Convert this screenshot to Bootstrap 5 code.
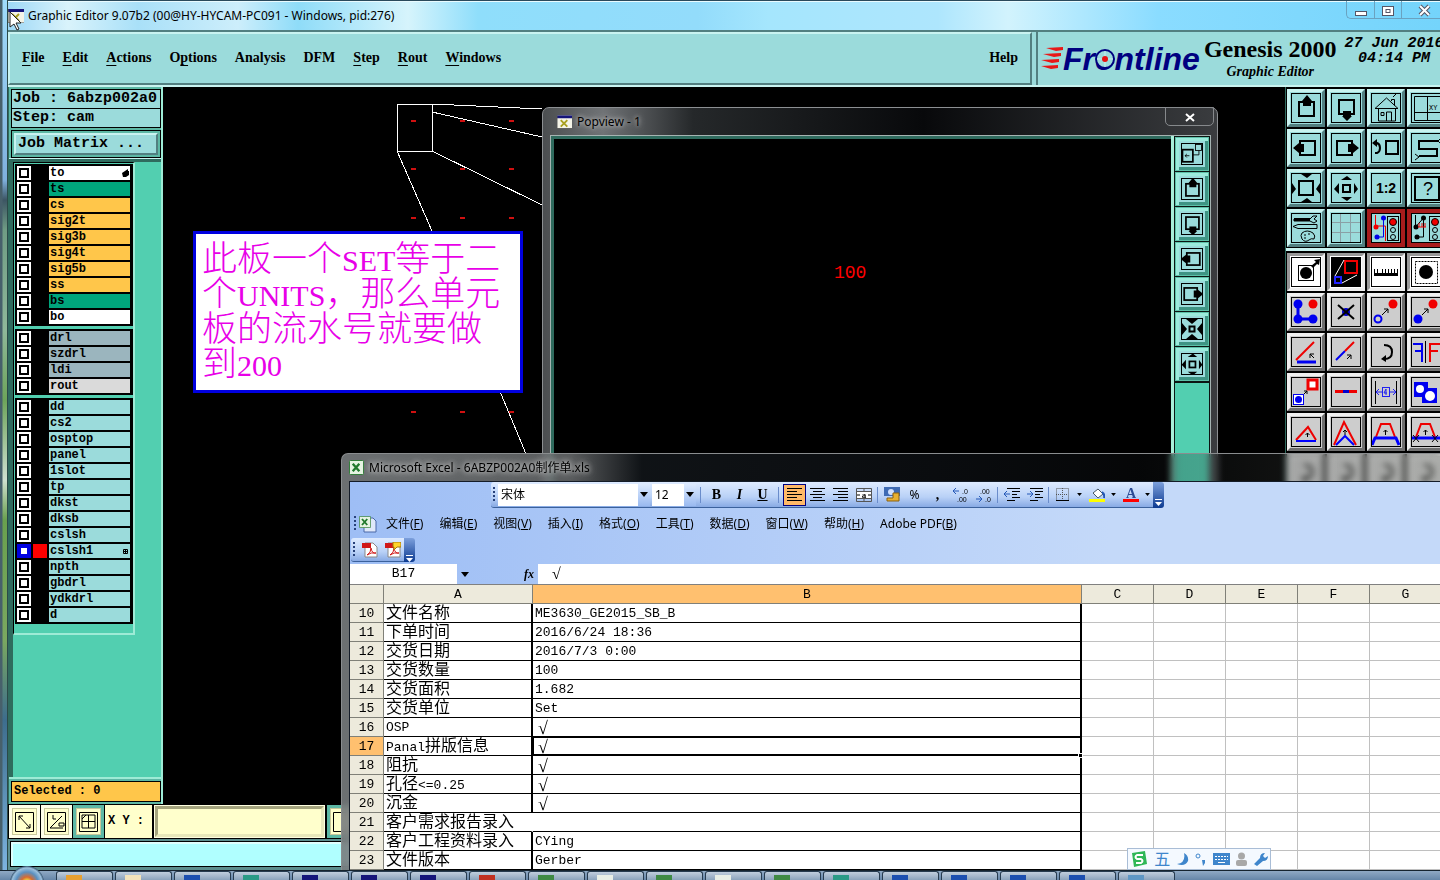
<!DOCTYPE html>
<html lang="zh-CN">
<head>
<meta charset="utf-8">
<meta name="viewport" content="width=device-width, initial-scale=1">
<title>Graphic Editor</title>
<link href="https://cdn.jsdelivr.net/npm/bootstrap@5.3.0/dist/css/bootstrap.min.css" rel="stylesheet">
<style>
:root{--aqua:#9bdbdb;--teal:#52cfb0;--deep:#2f6b5e;--edge:#527f80;--glow:#c9f3f0;--cream:#ffffcc;--amber:#ffc64a}
body{font-family:"Noto Sans","Noto Sans CJK SC",sans-serif;font-size:12px;line-height:16px;color:#000;background:#000}
button,input,select{font:inherit;color:inherit;padding:0;margin:0;border-radius:0}
button{background:none;border:0}
svg{display:block}
.desk{height:100vh;background:#000}
.frame-edge{width:8px;border-right:1px solid #2b4a48;background:linear-gradient(90deg,#47606b 0 2px,transparent 3px),linear-gradient(#9fdcfb 0,#8fc3ea 100px,#7fb0dd 180px,#3c5563 200px,#6f9c84 230px,#8fb89a 330px,#6da45a 400px,#cfe0d0 480px,#69a04e 520px,#7aa860 640px,#3d6d8d 720px,#7db4e0)}
.titlebar{height:30px;background:linear-gradient(90deg,#9ed8f6 0,#d9f3fb 60px,#a9e0f8 130px,#cdeefb 230px,#8fdcf8 290px,#d6f4fc 400px,#8fdefb 470px,#93dcfb 690px,#a5e6fd 760px,#aee6fd 930px,#d2f3fd 1000px,#8adcff 1150px,#74d4fb 100%);border-top:1px solid #2a4a5c;box-shadow:inset 0 1px #e9fbff}
.pointer{left:9px;top:11px;z-index:9}
.caps{height:18px;border:1px solid #6aa2c0;border-top:0;border-right:0;border-radius:0 0 0 5px}
.caps button{height:17px}
.caps button+button{border-left:1px solid #6aa2c0}
.panel-out{background:var(--aqua);border:2px solid;border-color:var(--glow) var(--edge) var(--edge) var(--glow)}
.topbar{height:57px;background:var(--aqua);border-top:2px solid var(--edge);border-bottom:2px solid var(--glow)}
.mainmenu{font:bold 14px/18px "Liberation Serif",serif;gap:18px;padding:0 12px 2px}
.mainmenu a{color:#000;text-decoration:none}
.mainmenu u{text-underline-offset:3px}
.brandbox{width:404px;border-left:2px solid var(--edge)}
.logo-txt{font:italic bold 32px/32px "Liberation Sans",sans-serif;color:#000080}
.logo-o{bottom:8px}
.prod{font:bold 24px/26px "Liberation Serif",serif}
.prod-sub{font:italic bold 14px/20px "Liberation Serif",serif}
.clock{font:italic bold 15px/15px "Liberation Mono",monospace;white-space:pre}
.side{width:155px;background:var(--teal);border-left:1px solid var(--deep);border-right:2px solid #9eebd6}
.side-head{background:#5db8a5;padding:2px 0 0 2px;border-bottom:1px solid var(--glow)}
.jobline{height:20px;border:1px solid #000;background:var(--aqua);font:bold 15px/18px "Liberation Mono",monospace;padding-left:1px;white-space:pre}
.jobline+.jobline{margin-top:-1px}
.jobbtn{width:100%;height:22px;background:var(--aqua);border:2px solid;border-color:var(--glow) var(--edge) var(--edge) var(--glow);font:bold 15px/18px "Liberation Mono",monospace;text-align:left;padding-left:2px}
.jobbtn-wrap{border:1px solid #000;padding:2px;margin-top:2px;height:28px}
.layers{border-top:3px solid var(--deep);border-left:4px solid var(--deep)}
.layer-panel{width:122px;border:1px solid #000;border-right:2px solid #9eebd6;border-bottom:2px solid #9eebd6;padding:1px 0 9px 1px;gap:3px}
.layer-set{background:#000;width:118px;padding:1px 2px}
.layer-row{height:16px;gap:2px;font:bold 12px/14px "Liberation Mono",monospace}
.layer-row input{appearance:none;width:14px;height:14px;background:#fff;border:2px solid #fff;outline:2px solid #000;outline-offset:-4px}
.layer-row.on input{border-color:#0000e0;outline-color:#0000e0}
.layer-row i{width:14px;height:14px}
.layer-row.on i{background:#f00}
.layer-row label{width:81px;height:14px;padding-left:1px;background:var(--aqua);display:flex;align-items:center;justify-content:space-between}
.layer-row .bg-w{background:#fff}.layer-row .bg-g{background:#00a57c}.layer-row .bg-o{background:var(--amber)}
.layer-row .bg-s{background:#9bb5be}.layer-row .bg-l{background:#dadada}
.picked{height:21px;margin:0 0 2px 2px;border:1px solid #000;background:var(--amber);font:bold 12px/18px "Liberation Mono",monospace;padding-left:2px}
.side-foot{background:#5db8a5;border-top:2px solid #9eebd6;padding-top:2px}
.note{left:30px;top:144px;width:330px;height:162px;border:3px solid #0000e0;background:#fff;color:#e800e8;padding:8px 6px 0;font:300 35px/35px "Liberation Serif","Noto Sans CJK SC",sans-serif;white-space:nowrap}
.note b{font-weight:400;font-size:30px;line-height:30px}
.tools{width:155px;border-left:1px solid var(--deep);background:#000}
.tool-grid{display:grid;grid-template-columns:repeat(4,38px);gap:2px;width:160px;padding:2px 0 0 1px}
.tool-grid+.tool-grid{border-top:3px solid var(--glow);margin-top:1px;padding-top:2px}
.tool{width:38px;height:38px;border:3px solid;border-color:var(--glow) var(--edge) var(--edge) var(--glow);background:var(--aqua);padding:1px}
.tool.red{border-color:#a81c1c;background:#a81c1c}.tool.red svg{background:var(--aqua)}
.tool.gray{border-color:#f0f0f0 #6f6f6f #6f6f6f #f0f0f0;background:#cdcdcd}
.tool.white{background:#fff;border-color:#999 #eee #eee #999}
.tool svg{width:30px;height:30px}
.cmdbar{height:35px;background:#000;padding:1px 0 1px 1px;gap:1px}
.cmd{width:31px;height:33px;background:var(--cream);border:3px solid #ffffe8;outline:1px solid #c8c89c;outline-offset:-4px;padding:3px}
.cmd.on{border-color:#5db8a5}
.cmdbar label{width:47px;background:var(--cream);font:bold 12px/33px "Liberation Mono",monospace;padding-left:3px}
.cmdin{width:169px;background:var(--cream);border:3px solid;border-color:#a5a57e #e8e8bb #e8e8bb #a5a57e;outline:1px solid #ffffe0;margin:1px 2px}
.statusrow{height:31px;background:#5d8f8f;padding:2px 0 2px 2px}
.statusrow div{height:26px;border:1px solid #000;background:#b0ffff;box-shadow:inset 2px 2px #dffffd}
.tasks{height:10px;z-index:5;background:linear-gradient(#8fa9c4,#6686a8);border-top:1px solid #16242f}
.task-list{gap:2px}
.task{width:57px;height:9px;border:1px solid #273c50;border-bottom:0;border-radius:3px 3px 0 0;background:linear-gradient(#c0cedd,#8ba3bc);padding-left:9px}
.task i{display:block;width:16px;height:5px;margin-top:3px}
.orb{width:34px;height:34px;left:10px;top:-5px;border-radius:50%;background:radial-gradient(circle at 50% 50%,#e8d040 0 3px,#d86a30 6px,#5a90c0 11px,#9cc0dc 15px,#355470 17px)}
.popview{left:542px;top:107px;width:676px;height:400px;border:1px solid #8c8f92;border-radius:7px 7px 0 0;background:linear-gradient(90deg,#4b4e50,#707376 60px,#25282a 150px,#08090b 380px,#3a3c3f 100%);padding:0 6px}
.pop-title{height:27px;color:#000;text-shadow:0 0 6px #ccc,0 0 4px #aaa;gap:5px}
.pop-x{right:3px;top:-1px;width:49px;height:19px;border:1px solid #86898c;border-radius:0 0 5px 5px;color:#fff}
.pop-body{border:1px solid #a5b4b2;height:100%;background:#000;margin-left:1px}
.pop-view{border:solid var(--deep);border-width:3px 0 0 3px;color:#f00;font:18px/20px "Liberation Mono",monospace;padding:124px 0 0 280px}
.pop-tools{width:39px;border-left:3px solid #a9efd9;padding:1px 1px 0 1px;gap:1px;background:#0b1512}
.pop-tools .mini{width:34px;height:34px;background:var(--aqua);border:1px solid #5cc0a8;box-shadow:inset 3px 3px #9cebdc,inset -3px -3px #3f9484;padding:5px}
.pop-tools .fill{background:var(--teal);margin-top:1px}
.excel{left:341px;top:453px;right:0;bottom:10px;z-index:2;border:1px solid #8a8d8f;border-right:0;border-bottom:0;border-radius:7px 0 0 0;background:linear-gradient(90deg,rgba(120,124,126,.9) 0,rgba(110,113,115,.8) 230px,rgba(18,22,26,.85) 300px,rgba(14,17,21,.7) 600px,rgba(22,26,30,.25) 800px,rgba(90,94,86,.3) 100%);backdrop-filter:blur(3px);padding-left:7px}
.xl-title{height:27px;gap:5px}
.xl-title span{text-shadow:0 0 5px #ddd,0 0 8px #ccc}
.xl-body{border:1px solid #141c28;border-right:0;background:linear-gradient(90deg,#9ebef5,#c4d9f9 760px)}
.xl-rowa{height:28px;padding-left:141px}
.xl-bar{height:26px;background:linear-gradient(#deebff,#b9d1f7 60%,#88aae4);border-bottom:1px solid #3b619c;border-radius:3px 0 0 3px;padding-left:2px}
.xl-bar.short,.xl-end.short{height:24px}
.grip{width:5px;height:16px;background:repeating-linear-gradient(#27417a 0 2px,transparent 2px 4px);background-clip:content-box;padding-right:3px}
.xl-sel{appearance:none;border:0;border-radius:0;height:22px;padding:0 3px;background:#fff;font-size:12px;line-height:22px;width:140px}
.xl-sel.size{width:32px;margin-left:2px}
.xl-dd{width:12px;height:22px;background:linear-gradient(#deebff,#9abaf0)}
.xb{width:23px;height:22px;display:flex;align-items:center;justify-content:center}
.xb.on{background:#ffb967;border:1px solid #000080}
.xb.ser{font:bold 14px/18px "Liberation Serif",serif}
.car{width:11px;height:22px;display:flex;align-items:center;justify-content:center}
.vsep{width:1px;height:16px;background:#6a8ccb;margin:0 4px}
.vsep.tight{margin:0 2px}
.xl-end{width:11px;height:26px;background:linear-gradient(#7da0dc,#0c3a91);border-radius:0 3px 3px 0;padding:17px 2px 0}
.xl-menu{height:28px;gap:9px;padding-left:4px}
.xl-links{gap:16px}
.xl-menu a{color:#000;text-decoration:none;white-space:nowrap}
.xl-rowc{height:26px;padding-left:1px}
.fx{height:20px}
.fx-mid{width:81px}
.fx-mid i{font-family:"Liberation Serif",serif}
.namebox{width:107px;border:0;background:#fff;text-align:center;font:13px/20px "Liberation Mono",monospace}
.fx-in{border:0;background:#fff;padding-left:14px;font:16px/18px "Liberation Serif","Noto Sans CJK SC",serif}
.sheet{table-layout:fixed;width:1092px;border-collapse:separate;border-spacing:0;background:#fff;border-top:1px solid #808080;font:13px/14px "Liberation Mono","Noto Sans CJK SC",monospace;color:#000}
.sheet th,.sheet td{height:19px;padding:3px 0 0 2px;white-space:nowrap;border-right:1px solid #c0c0c0;border-bottom:1px solid #c0c0c0;overflow:hidden;vertical-align:top}
.sheet th{background:#edeadc;font-weight:400;text-align:center;border-color:#808078;padding-left:0}
.sheet .hot{background:#ffc06f}
.sheet td.k,.sheet td.v{border-bottom-color:#000;border-right:2px solid #000}
.sheet .z{font-size:16px}
.sheet td.tick{font-family:"Liberation Serif",serif;font-size:18px;padding-left:5px}
.sheet td.nob{border-right-color:#fff}
.sheet .cur{position:relative;box-shadow:inset 1px 1px #000,inset 0 -1px #000;overflow:visible}
.sheet .cur::after{content:"";position:absolute;right:-3px;bottom:-3px;width:5px;height:5px;background:#000;border:1px solid #fff}
.ime{left:1127px;bottom:10px;z-index:6;width:144px;height:22px;border:1px solid #a9bdd6;background:#f4f9ff;padding:0 2px;color:#3f86cc;font-size:16px;line-height:20px}
</style>
</head>
<body class="overflow-hidden">
<svg width="0" height="0" class="position-absolute" aria-hidden="true"><defs>
<g id="fr"><rect x=".5" y=".5" width="29" height="29" fill="none" stroke="#000"/></g>
<symbol id="up" viewBox="0 0 30 30"><rect x="8" y="9" width="15" height="14" fill="none" stroke="#000" stroke-width="2"/><path d="M12 13V8h-1l5-6 5 6h-1v5z"/></symbol>
<symbol id="dn" viewBox="0 0 30 30"><rect x="8" y="7" width="15" height="14" fill="none" stroke="#000" stroke-width="2"/><path d="M12 18v5h-1l5 5 5-5h-1v-5z"/></symbol>
<symbol id="lf" viewBox="0 0 30 30"><rect x="9" y="8" width="15" height="14" fill="none" stroke="#000" stroke-width="2"/><path d="M13 11H8v-1l-6 5 6 5v-1h5z"/></symbol>
<symbol id="rt" viewBox="0 0 30 30"><rect x="6" y="8" width="15" height="14" fill="none" stroke="#000" stroke-width="2"/><path d="M17 11h5v-1l6 5-6 5v-1h-5z"/></symbol>
<symbol id="home" viewBox="0 0 30 30"><g fill="none" stroke="#000"><path d="M4 15.500h23L15.500 5zM7.500 16v12h17V16M20.500 8V6.500h3v6M22 4l3-3"/><path d="M15.500 28v-9h5v9M10 19.500h3v3h-3z"/></g></symbol>
<symbol id="xy" viewBox="0 0 30 30"><path d="M3.500 3.500h26v24h-26zM16.500 4v23M4 19.500h25" fill="none" stroke="#000"/><text x="18" y="17" font-size="7" font-family="Liberation Mono">XY</text></symbol>
<symbol id="bk" viewBox="0 0 30 30"><rect x="15" y="8" width="12" height="13" fill="none" stroke="#000" stroke-width="2"/><path d="M4 20h2q3-1 3-5t-3-5H4" fill="none" stroke="#000" stroke-width="2"/><path d="M1 10l5-4v8z"/></symbol>
<symbol id="sn" viewBox="0 0 30 30"><path d="M27 8H8v8h18v7H8" fill="none" stroke="#000" stroke-width="2"/><path d="M4 27l4-3-4-3M30 5l-3 3 3 3" fill="none" stroke="#000"/></symbol>
<symbol id="out" viewBox="0 0 30 30"><rect x="8" y="8" width="14" height="14" fill="none" stroke="#000" stroke-width="2"/><path d="M10 1h11l-5 4zM10 29h11l-5-4zM1 10v11l4-5zM29 10v11l-4-5z"/></symbol>
<symbol id="in" viewBox="0 0 30 30"><rect x="12" y="12" width="7" height="7" fill="none" stroke="#000" stroke-width="2"/><path d="M10 7h11l-5-4zM10 24h11l-5 4zM8 10v11l-5-5zM23 10v11l4-5z"/></symbol>
<symbol id="r12" viewBox="0 0 30 30"><text x="15" y="20" text-anchor="middle" font-size="14" font-weight="bold" font-family="Liberation Sans">1:2</text></symbol>
<symbol id="qm" viewBox="0 0 30 30"><rect x="4" y="4" width="24" height="23" fill="none" stroke="#000" stroke-width="2"/><text x="17" y="22" text-anchor="middle" font-size="18" font-family="Liberation Sans">?</text></symbol>
<symbol id="wr" viewBox="0 0 30 30"><path d="M3 6h16l3-3h4l-3 3 3 2-3 2-4-2H3zM2 13.500l5-2h19v4H7z" fill="none" stroke="#000"/><path d="M3 5h16v3H3z"/><path d="M11 20q5-4 11 0 3 3 1 6-3-1-5 1-4 3-7-1-2-4 0-6z" fill="none" stroke="#000"/><path d="M13 22h2M17 21h2M13 25h2" stroke="#000"/></symbol>
<symbol id="gd" viewBox="0 0 30 30"><path d="M9.500 1v28M19.500 1v28M1 9.500h28M1 19.500h28" stroke="#8a9fa5"/></symbol>
<symbol id="tf" viewBox="0 0 30 30"><rect x="16.500" y="3.500" width="11" height="24" fill="none" stroke="#000"/><circle cx="22" cy="9" r="3.500" fill="#f00000" stroke="#000"/><circle cx="22" cy="17" r="2.500" fill="none" stroke="#000"/><circle cx="22" cy="24" r="2.500" fill="none" stroke="#000"/><path d="M4.500 2v11h10v15" stroke="#f00000" fill="none"/><path d="M12.500 5v19H6" stroke="#0000e8" fill="none"/><circle cx="5" cy="14" r="2.500" fill="#f00000"/><circle cx="12.500" cy="5" r="2.500" fill="#0000e8"/><circle cx="6" cy="24" r="2.500" fill="#0000e8"/></symbol>
<symbol id="tg" viewBox="0 0 30 30"><rect x="18.500" y="3.500" width="11" height="24" fill="none" stroke="#000"/><circle cx="24" cy="9" r="3.500" fill="#f00000" stroke="#000"/><circle cx="24" cy="17" r="2.500" fill="none" stroke="#000"/><circle cx="24" cy="24" r="2.500" fill="none" stroke="#000"/><path d="M4.500 2v12l8-9v19H6" stroke="#000" fill="none"/><circle cx="5" cy="14" r="2.500"/><circle cx="12.500" cy="5" r="2.500"/><circle cx="6" cy="24" r="2.500"/><path d="M7 14h8M8 14v-4M11 14v-4M14 14v-4" stroke="#f00000"/></symbol>
<symbol id="s1" viewBox="0 0 30 30"><rect x="7.500" y="8.500" width="15" height="15" fill="none" stroke="#000"/><circle cx="15" cy="16" r="6"/><path d="M20 9l5-4-2-2 6-1-1 6-2-1-4 4z"/></symbol>
<symbol id="s2" viewBox="0 0 30 30"><rect x="1" y="1" width="28" height="28"/><rect x="14" y="4" width="12" height="12" fill="none" stroke="#e00" stroke-width="2"/><rect x="4" y="20" width="6" height="6" fill="none" stroke="#22f" stroke-width="2"/><path d="M4 19L13 3M11 26l15-8" stroke="#fff"/></symbol>
<symbol id="s3" viewBox="0 0 30 30"><path d="M3 12v7h24v-7h-1v4h-2v-4h-1v4h-2v-4h-1v4h-2v-4h-1v4h-2v-4h-1v4h-2v-4h-1v4h-2v-4H9v4H7v-4H6v4H4v-4z"/></symbol>
<symbol id="s4" viewBox="0 0 30 30"><rect x="4.500" y="4.500" width="22" height="22" fill="none" stroke="#000" stroke-dasharray="2 1"/><circle cx="15" cy="15" r="7"/></symbol>
<symbol id="a1" viewBox="0 0 30 30"><path d="M7 7v15h15" stroke="#0000f0" stroke-width="3" fill="none"/><g fill="#0000f0"><circle cx="7" cy="7" r="4.500"/><circle cx="7" cy="22" r="4.500"/><circle cx="22" cy="22" r="4.500"/></g><circle cx="22" cy="7" r="4.500" fill="#f00000"/></symbol>
<symbol id="a2" viewBox="0 0 30 30"><circle cx="15" cy="15" r="4" fill="#0000d0"/><path d="M7 8l16 14M23 8L7 22" stroke="#000" stroke-width="2"/></symbol>
<symbol id="a3" viewBox="0 0 30 30"><circle cx="22" cy="7" r="4.500" fill="#f00000"/><circle cx="7" cy="22" r="3.500" fill="#cdcdcd" stroke="#0000f0" stroke-width="2"/><path d="M11 18l6-6m-4 0h4v4" stroke="#000" fill="none"/></symbol>
<symbol id="a4" viewBox="0 0 30 30"><circle cx="22" cy="7" r="4.500" fill="#f00000"/><circle cx="7" cy="22" r="4.500" fill="#0000f0"/><path d="M11 18l6-6m-4 0h4v4" stroke="#000" fill="none"/></symbol>
<symbol id="b1" viewBox="0 0 30 30"><path d="M5 23L23 5" stroke="#e00" stroke-width="2"/><path d="M6 25h19" stroke="#0000f0" stroke-width="3"/><path d="M23 21l-4-4m0 4v-4h4" stroke="#000" fill="none"/></symbol>
<symbol id="b2" viewBox="0 0 30 30"><path d="M5 23l9-9" stroke="#0000f0" stroke-width="2"/><path d="M14 14l9-9" stroke="#e00" stroke-width="2"/><path d="M16 22l4-4m-4 0h4v4" stroke="#000" fill="none"/></symbol>
<symbol id="b3" viewBox="0 0 30 30"><path d="M13 8q8 0 8 7t-8 7" fill="none" stroke="#000" stroke-width="2"/><path d="M10 22l5-4v7z"/></symbol>
<symbol id="b4" viewBox="0 0 30 30"><path d="M2 7h9v18M4 14h7" stroke="#0000f0" stroke-width="2" fill="none"/><path d="M29 7H19v18M19 14h8" stroke="#e00" stroke-width="2" fill="none"/><path d="M14.500 4v22" stroke="#000"/></symbol>
<symbol id="c1" viewBox="0 0 30 30"><rect x="17" y="3" width="9" height="9" fill="#fff" stroke="#f00000" stroke-width="3"/><rect x="2.500" y="17.500" width="10" height="10" fill="#fff" stroke="#0000f0"/><circle cx="7.500" cy="22.500" r="3.500" fill="#0000f0"/><path d="M13 17l3-3m-3 0h3v3" stroke="#000" fill="none"/></symbol>
<symbol id="c2" viewBox="0 0 30 30"><path d="M4 14.500h22" stroke="#e00" stroke-width="3"/><path d="M12 14.500h6" stroke="#0000d0" stroke-width="3"/></symbol>
<symbol id="c3" viewBox="0 0 30 30"><path d="M4.500 4v23M25.500 4v23" stroke="#000"/><rect x="11.500" y="10.500" width="7" height="9" fill="none" stroke="#2020f0"/><path d="M5 15h6M19 15h6M8 12l-3 3 3 3M22 12l3 3-3 3M16 16h-3l2-4v6" stroke="#2020f0" fill="none"/></symbol>
<symbol id="c4" viewBox="0 0 30 30"><path d="M3 5h14v6h9v15H11v-6H3z" fill="#0000f0"/><circle cx="9" cy="12" r="4" fill="#fff"/><circle cx="19" cy="19" r="5" fill="#fff"/></symbol>
<symbol id="d1" viewBox="0 0 30 30"><path d="M5 23L17 10l8 13" fill="none" stroke="#e00" stroke-width="2"/><path d="M5 24h20" stroke="#00f" stroke-width="2"/><path d="M16.500 20v-4m-2 2l2-2 2 2" stroke="#000" fill="none"/></symbol>
<symbol id="d2" viewBox="0 0 30 30"><path d="M3 28L13 5l12 23" fill="none" stroke="#e00" stroke-width="2"/><path d="M5 28l9-9 9 9" fill="none" stroke="#00f" stroke-width="2"/><path d="M14 18v-5m-2 2l2-2 2 2" stroke="#000" fill="none"/></symbol>
<symbol id="d3" viewBox="0 0 30 30"><path d="M5 20l5-13h9l5 13" fill="none" stroke="#e00" stroke-width="2"/><path d="M1 28l3-7h21l3 7" fill="none" stroke="#00f" stroke-width="3"/><path d="M14.500 18v-5m-2 2l2-2 2 2" stroke="#000" fill="none"/></symbol>
<symbol id="d4" viewBox="0 0 30 30"><path d="M5 20l5-13h9l5 13" fill="none" stroke="#e00" stroke-width="2"/><path d="M1 21h28" stroke="#00f" stroke-width="3"/><path d="M2 18l6 7m0-7l-6 7M21 18l6 7m0-7l-6 7M14.500 18v-5m-2 2l2-2 2 2" stroke="#000" fill="none"/></symbol>
<symbol id="pv" viewBox="0 0 30 30"><g fill="none" stroke="#000"><rect x="4" y="10" width="12" height="14" stroke-width="2"/><rect x="19" y="4" width="7" height="7"/><path d="M16 16h7v-5M12 17H7m2-2l-2 2 2 2"/></g></symbol>
<symbol id="xwin" viewBox="0 0 16 14"><path d="M0 0h16v14H0z" fill="#f4f4e8"/><path d="M0 0h16v3H0z" fill="#15157a"/><path d="M4 5l7 7M11 5l-7 7" stroke="#a8a020" stroke-width="2"/><path d="M0 0v14h16" fill="none" stroke="#555"/></symbol>
<symbol id="xls" viewBox="0 0 16 16"><rect x=".5" y=".5" width="15" height="15" rx="1" fill="#e5f3e2" stroke="#2a7a32"/><path d="M4 4l7 8M11 4l-7 8" stroke="#217a2d" stroke-width="2.500"/></symbol>
<symbol id="tri" viewBox="0 0 8 5"><path d="M0 0h8L4 5z"/></symbol>
<symbol id="pdf" viewBox="0 0 16 16"><path d="M3 1h8l4 4v10H3z" fill="#fff" stroke="#888"/><path d="M0 1h9v5H0z" fill="#d01818"/><path d="M5 13q4-2 4-7 1 6 5 5-5-1-9 2" fill="none" stroke="#d01818"/></symbol>
</defs></svg>

<div class="desk d-flex flex-column position-relative">
 <div class="d-flex flex-grow-1 overflow-hidden">
  <div class="frame-edge flex-shrink-0"></div>
  <main class="flex-grow-1 d-flex flex-column overflow-hidden position-relative">
   <header class="titlebar d-flex align-items-start flex-shrink-0">
    <div class="d-flex align-items-center gap-1 h-100 flex-grow-1"><svg width="16" height="14"><use href="#xwin"/></svg><span>Graphic Editor 9.07b2 (00@HY-HYCAM-PC091 - Windows, pid:276)</span></div>
    <div class="caps d-flex">
     <button aria-label="Minimize"><svg width="27" height="16"><rect x="8.500" y="9.500" width="11" height="4" fill="#fff" stroke="#556"/></svg></button>
     <button aria-label="Restore"><svg width="26" height="16"><rect x="7.500" y="4.500" width="11" height="9" fill="#fff" stroke="#556"/><rect x="11" y="7.500" width="4" height="3" fill="none" stroke="#556"/></svg></button>
     <button aria-label="Close"><svg width="38" height="16"><path d="M18 4l9 9M27 4l-9 9" stroke="#556" stroke-width="4"/><path d="M18 4l9 9M27 4l-9 9" stroke="#fff" stroke-width="2"/></svg></button>
    </div>
   </header>

   <div class="topbar d-flex flex-shrink-0">
    <nav class="mainmenu panel-out d-flex align-items-center flex-grow-1 me-1">
     <a href="#"><u>F</u>ile</a><a href="#"><u>E</u>dit</a><a href="#"><u>A</u>ctions</a><a href="#">O<u>p</u>tions</a><a href="#">Analysis</a><a href="#">DFM</a><a href="#"><u>S</u>tep</a><a href="#"><u>R</u>out</a><a href="#"><u>W</u>indows</a><a href="#" class="ms-auto">Help</a>
    </nav>
    <div class="brandbox d-flex flex-shrink-0 overflow-hidden">
     <div class="d-flex align-items-center">
      <svg width="25" height="26"><g fill="#e81818"><path d="M8 2l17-1v3l-7 1zM5 8l18-1v3l-7 1zM3 14l18-1v3l-7 1zM3 20l17-1v3l-7 1z"/></g></svg>
      <span class="logo-txt">Fr<span class="position-relative">o<svg class="logo-o position-absolute start-0" width="20" height="20"><circle cx="10" cy="10" r="9" fill="#9bdbdb" stroke="#000080" stroke-width="2"/><path d="M10 2v16M2 10h16" stroke="#c8eeee"/><circle cx="10" cy="10" r="3" fill="#e81010"/></svg></span>ntline</span>
     </div>
     <div class="text-center ms-1 text-nowrap pt-1"><div class="prod">Genesis 2000</div><div class="prod-sub">Graphic Editor</div></div>
     <div class="clock text-center ms-2 pt-1">27 Jun 2016<br>04:14 PM</div>
    </div>
   </div>

   <div class="d-flex flex-grow-1 overflow-hidden">
    <aside class="side d-flex flex-column flex-shrink-0">
     <div class="side-head">
      <div class="jobline">Job : 6abzp002a0</div><div class="jobline">Step: cam</div>
      <div class="jobbtn-wrap"><button class="jobbtn">Job Matrix ...</button></div>
     </div>
     <div class="layers flex-grow-1">
      <div class="layer-panel d-flex flex-column">
       <div class="layer-set">
        <div class="layer-row d-flex align-items-center"><input type="checkbox" id="l1"><i></i><label for="l1" class="bg-w">to<svg width="9" height="8"><path d="M1 4l3-2 3-2v2h1v4L5 8H2z"/></svg></label></div>
        <div class="layer-row d-flex align-items-center"><input type="checkbox" id="l2"><i></i><label for="l2" class="bg-g">ts</label></div>
        <div class="layer-row d-flex align-items-center"><input type="checkbox" id="l3"><i></i><label for="l3" class="bg-o">cs</label></div>
        <div class="layer-row d-flex align-items-center"><input type="checkbox" id="l4"><i></i><label for="l4" class="bg-o">sig2t</label></div>
        <div class="layer-row d-flex align-items-center"><input type="checkbox" id="l5"><i></i><label for="l5" class="bg-o">sig3b</label></div>
        <div class="layer-row d-flex align-items-center"><input type="checkbox" id="l6"><i></i><label for="l6" class="bg-o">sig4t</label></div>
        <div class="layer-row d-flex align-items-center"><input type="checkbox" id="l7"><i></i><label for="l7" class="bg-o">sig5b</label></div>
        <div class="layer-row d-flex align-items-center"><input type="checkbox" id="l8"><i></i><label for="l8" class="bg-o">ss</label></div>
        <div class="layer-row d-flex align-items-center"><input type="checkbox" id="l9"><i></i><label for="l9" class="bg-g">bs</label></div>
        <div class="layer-row d-flex align-items-center"><input type="checkbox" id="l10"><i></i><label for="l10" class="bg-w">bo</label></div>
       </div>
       <div class="layer-set">
        <div class="layer-row d-flex align-items-center"><input type="checkbox" id="l11"><i></i><label for="l11" class="bg-s">drl</label></div>
        <div class="layer-row d-flex align-items-center"><input type="checkbox" id="l12"><i></i><label for="l12" class="bg-s">szdrl</label></div>
        <div class="layer-row d-flex align-items-center"><input type="checkbox" id="l13"><i></i><label for="l13" class="bg-s">ldi</label></div>
        <div class="layer-row d-flex align-items-center"><input type="checkbox" id="l14"><i></i><label for="l14" class="bg-l">rout</label></div>
       </div>
       <div class="layer-set">
        <div class="layer-row d-flex align-items-center"><input type="checkbox" id="l15"><i></i><label for="l15">dd</label></div>
        <div class="layer-row d-flex align-items-center"><input type="checkbox" id="l16"><i></i><label for="l16">cs2</label></div>
        <div class="layer-row d-flex align-items-center"><input type="checkbox" id="l17"><i></i><label for="l17">osptop</label></div>
        <div class="layer-row d-flex align-items-center"><input type="checkbox" id="l18"><i></i><label for="l18">panel</label></div>
        <div class="layer-row d-flex align-items-center"><input type="checkbox" id="l19"><i></i><label for="l19">1slot</label></div>
        <div class="layer-row d-flex align-items-center"><input type="checkbox" id="l20"><i></i><label for="l20">tp</label></div>
        <div class="layer-row d-flex align-items-center"><input type="checkbox" id="l21"><i></i><label for="l21">dkst</label></div>
        <div class="layer-row d-flex align-items-center"><input type="checkbox" id="l22"><i></i><label for="l22">dksb</label></div>
        <div class="layer-row d-flex align-items-center"><input type="checkbox" id="l23"><i></i><label for="l23">cslsh</label></div>
        <div class="layer-row on d-flex align-items-center"><input type="checkbox" id="l24" checked><i></i><label for="l24">cslsh1<svg width="7" height="5"><path d="M.5.500h4v4h-4zM2.500 0v5M0 2.500h5" fill="none" stroke="#000"/></svg></label></div>
        <div class="layer-row d-flex align-items-center"><input type="checkbox" id="l25"><i></i><label for="l25">npth</label></div>
        <div class="layer-row d-flex align-items-center"><input type="checkbox" id="l26"><i></i><label for="l26">gbdrl</label></div>
        <div class="layer-row d-flex align-items-center"><input type="checkbox" id="l27"><i></i><label for="l27">ydkdrl</label></div>
        <div class="layer-row d-flex align-items-center"><input type="checkbox" id="l28"><i></i><label for="l28">d</label></div>
       </div>
      </div>
     </div>
     <div class="side-foot"><div class="picked">Selected : 0</div></div>
    </aside>

    <section class="flex-grow-1 position-relative overflow-hidden">
     <svg class="position-absolute top-0 start-0 w-100 h-100"><g fill="none" stroke="#fff" shape-rendering="crispEdges"><path d="M234.500 17.500h35v47h-35zM269 17l110 5M269 25l110 25M269 64l110 54M234 64l35 80M336 302l27 65"/></g><path d="M248 34h5M297 34h5M346 34h5M248 82h5M297 82h5M346 82h5M248 131h5M297 131h5M346 131h5M248 325h5M297 325h5M346 325h5" stroke="#d01010" stroke-width="2"/></svg>
     <div class="note position-absolute">此板一个<b>SET</b>等于二<br>个<b>UNITS</b>，那么单元<br>板的流水号就要做<br>到<b>200</b></div>
    </section>

    <aside class="tools flex-shrink-0 overflow-hidden">
     <div class="tool-grid">
      <button class="tool" aria-label="Pan up"><svg><use href="#up"/><use href="#fr"/></svg></button><button class="tool" aria-label="Pan down"><svg><use href="#dn"/><use href="#fr"/></svg></button><button class="tool" aria-label="Home"><svg><use href="#home"/><use href="#fr"/></svg></button><button class="tool" aria-label="Position"><svg><use href="#xy"/><use href="#fr"/></svg></button>
      <button class="tool" aria-label="Pan left"><svg><use href="#lf"/><use href="#fr"/></svg></button><button class="tool" aria-label="Pan right"><svg><use href="#rt"/><use href="#fr"/></svg></button><button class="tool" aria-label="Previous view"><svg><use href="#bk"/><use href="#fr"/></svg></button><button class="tool" aria-label="Snake"><svg><use href="#sn"/><use href="#fr"/></svg></button>
      <button class="tool" aria-label="Zoom in"><svg><use href="#out"/><use href="#fr"/></svg></button><button class="tool" aria-label="Zoom out"><svg><use href="#in"/><use href="#fr"/></svg></button><button class="tool" aria-label="Scale"><svg><use href="#r12"/><use href="#fr"/></svg></button><button class="tool" aria-label="Query"><svg><use href="#qm"/><use href="#fr"/></svg></button>
      <button class="tool" aria-label="Settings"><svg><use href="#wr"/><use href="#fr"/></svg></button><button class="tool" aria-label="Grid"><svg><use href="#gd"/><use href="#fr"/></svg></button><button class="tool red" aria-label="Nets"><svg><use href="#tf"/><use href="#fr"/></svg></button><button class="tool red" aria-label="Rules"><svg><use href="#tg"/><use href="#fr"/></svg></button>
     </div>
     <div class="tool-grid">
      <button class="tool white" aria-label="Select"><svg><use href="#s1"/><use href="#fr"/></svg></button><button class="tool white" aria-label="Zoom box"><svg><use href="#s2"/><use href="#fr"/></svg></button><button class="tool white" aria-label="Measure"><svg><use href="#s3"/><use href="#fr"/></svg></button><button class="tool white" aria-label="Area"><svg><use href="#s4"/><use href="#fr"/></svg></button>
      <button class="tool gray" aria-label="Add"><svg><use href="#a1"/><use href="#fr"/></svg></button><button class="tool gray" aria-label="Delete"><svg><use href="#a2"/><use href="#fr"/></svg></button><button class="tool gray" aria-label="Copy"><svg><use href="#a3"/><use href="#fr"/></svg></button><button class="tool gray" aria-label="Move"><svg><use href="#a4"/><use href="#fr"/></svg></button>
      <button class="tool gray" aria-label="Rotate"><svg><use href="#b1"/><use href="#fr"/></svg></button><button class="tool gray" aria-label="Stretch"><svg><use href="#b2"/><use href="#fr"/></svg></button><button class="tool gray" aria-label="Undo"><svg><use href="#b3"/><use href="#fr"/></svg></button><button class="tool gray" aria-label="Mirror"><svg><use href="#b4"/><use href="#fr"/></svg></button>
      <button class="tool gray" aria-label="Replace"><svg><use href="#c1"/><use href="#fr"/></svg></button><button class="tool gray" aria-label="Break"><svg><use href="#c2"/><use href="#fr"/></svg></button><button class="tool gray" aria-label="Spacing"><svg><use href="#c3"/><use href="#fr"/></svg></button><button class="tool gray" aria-label="Merge"><svg><use href="#c4"/><use href="#fr"/></svg></button>
      <button class="tool gray" aria-label="Corner"><svg><use href="#d1"/><use href="#fr"/></svg></button><button class="tool gray" aria-label="Peak"><svg><use href="#d2"/><use href="#fr"/></svg></button><button class="tool gray" aria-label="Slope"><svg><use href="#d3"/><use href="#fr"/></svg></button><button class="tool gray" aria-label="Trim"><svg><use href="#d4"/><use href="#fr"/></svg></button>
      <button class="tool gray" aria-label="Pick"><svg><use href="#b3"/></svg></button><button class="tool gray" aria-label="Pick one"><svg><use href="#b3"/></svg></button><button class="tool gray" aria-label="Pick net"><svg><use href="#b3"/></svg></button><button class="tool gray" aria-label="Pick all"><svg><use href="#b3"/></svg></button>
     </div>
    </aside>
   </div>

   <div class="cmdbar d-flex flex-shrink-0">
    <button class="cmd" aria-label="Snap"><svg width="19" height="20"><path d="M.5.500h18v19H.5zM4 4l11 12M4 8V4h4M15 12v4h-4" fill="none" stroke="#000"/></svg></button>
    <button class="cmd" aria-label="Angle"><svg width="19" height="20"><path d="M.5.500h18v19H.5zM3 16L15 4M3 16h13M6 3v4h3M12 11h5v3h-5z" fill="none" stroke="#000"/></svg></button>
    <button class="cmd on" aria-label="Grid snap"><svg width="19" height="20"><path d="M.5.500h18v19H.5zM3 3h13v13H3zM9.500 3v13M3 9.500h13M3 7l4-4" fill="none" stroke="#000"/></svg></button>
    <label for="xyin">X Y :</label><input id="xyin" class="cmdin" type="text">
    <button class="cmd on" aria-label="Enter"><svg width="19" height="20"><path d="M.5.500h18v19H.5z" fill="none" stroke="#000"/></svg></button>
   </div>
   <div class="statusrow flex-shrink-0"><div></div></div>
  </main>
 </div>

 <svg class="pointer position-absolute" width="13" height="20"><path d="M1 1v15l4-3 3 6 2-1-3-6h5z" fill="#fff" stroke="#222"/></svg>

 <section class="popview position-absolute">
  <div class="pop-title d-flex align-items-center ps-2"><svg width="15" height="14"><use href="#xwin"/></svg><span>Popview - 1</span></div>
  <button class="pop-x position-absolute" aria-label="Close popview"><svg width="47" height="16"><path d="M20 5l8 7M28 5l-8 7" stroke="#fff" stroke-width="2"/></svg></button>
  <div class="pop-body d-flex">
   <div class="pop-view flex-grow-1">100</div>
   <div class="pop-tools d-flex flex-column">
    <button class="mini" aria-label="Popview link"><svg width="22" height="22"><use href="#pv" x="-2" y="-2" width="26" height="26"/><rect x=".5" y=".5" width="21" height="21" fill="none" stroke="#000"/></svg></button>
    <button class="mini" aria-label="View up"><svg width="22" height="22"><use href="#up" x="-2" y="-2" width="26" height="26"/><rect x=".5" y=".5" width="21" height="21" fill="none" stroke="#000"/></svg></button>
    <button class="mini" aria-label="View down"><svg width="22" height="22"><use href="#dn" x="-2" y="-2" width="26" height="26"/><rect x=".5" y=".5" width="21" height="21" fill="none" stroke="#000"/></svg></button>
    <button class="mini" aria-label="View left"><svg width="22" height="22"><use href="#lf" x="-2" y="-2" width="26" height="26"/><rect x=".5" y=".5" width="21" height="21" fill="none" stroke="#000"/></svg></button>
    <button class="mini" aria-label="View right"><svg width="22" height="22"><use href="#rt" x="-2" y="-2" width="26" height="26"/><rect x=".5" y=".5" width="21" height="21" fill="none" stroke="#000"/></svg></button>
    <button class="mini" aria-label="View in"><svg width="22" height="22"><path d="M5 1h12l-6 5zM5 21h12l-6-5zM1 5v12l5-6zM21 5v12l-5-6z"/><rect x="8.500" y="8.500" width="5" height="5" fill="none" stroke="#000" stroke-width="2"/><rect x=".5" y=".5" width="21" height="21" fill="none" stroke="#000"/></svg></button>
    <button class="mini" aria-label="View out"><svg width="22" height="22"><use href="#in" x="-2" y="-2" width="26" height="26"/><rect x=".5" y=".5" width="21" height="21" fill="none" stroke="#000"/></svg></button>
    <div class="fill flex-grow-1"></div>
   </div>
  </div>
 </section>

 <section class="excel position-absolute overflow-hidden d-flex flex-column">
  <div class="xl-title d-flex align-items-center flex-shrink-0"><svg width="15" height="15"><use href="#xls"/></svg><span>Microsoft Excel - 6ABZP002A0制作单.xls</span></div>
  <div class="xl-body flex-grow-1">
   <div class="xl-rowa d-flex">
    <div class="xl-bar d-flex align-items-center">
     <span class="grip"></span>
     <select class="xl-sel" aria-label="Font"><option>宋体</option></select><button class="xl-dd" aria-label="Font list"><svg class="mx-auto" width="8" height="5"><use href="#tri"/></svg></button>
     <select class="xl-sel size" aria-label="Size"><option>12</option></select><button class="xl-dd" aria-label="Size list"><svg class="mx-auto" width="8" height="5"><use href="#tri"/></svg></button>
     <span class="vsep"></span>
     <button class="xb ser">B</button><button class="xb ser fst-italic">I</button><button class="xb ser"><u>U</u></button>
     <span class="vsep"></span>
     <button class="xb on" aria-label="Left"><svg width="15" height="13"><path d="M0 .5h15M0 3.500h10M0 6.500h15M0 9.500h10M0 12.500h15" stroke="#000"/></svg></button>
     <button class="xb" aria-label="Center"><svg width="15" height="13"><path d="M0 .5h15M3 3.500h9M0 6.500h15M3 9.500h9M0 12.500h15" stroke="#000"/></svg></button>
     <button class="xb" aria-label="Right"><svg width="15" height="13"><path d="M0 .5h15M5 3.500h10M0 6.500h15M5 9.500h10M0 12.500h15" stroke="#000"/></svg></button>
     <button class="xb" aria-label="Merge cells"><svg width="16" height="14"><path d="M.5.500h15v13H.5zM0 3.500h16M0 10.500h16M8 0v3M8 11v3" fill="none" stroke="#555"/><path d="M1 4h14v6H1z" fill="#fff"/><text x="8" y="10" text-anchor="middle" font-size="9" font-weight="bold" font-family="Liberation Serif">a</text><path d="M1 7h3M12 7h3" stroke="#000"/></svg></button>
     <span class="vsep tight"></span>
     <button class="xb" aria-label="Currency"><svg width="16" height="15"><rect width="16" height="9" fill="#3f6bb4"/><circle cx="7" cy="5" r="3" fill="#cfe0ff"/><path d="M9 6h6v8H3v-3h6z" fill="#e8b030" stroke="#8a6010"/></svg></button>
     <button class="xb">%</button><button class="xb ser">,</button>
     <button class="xb" aria-label="More decimals"><svg width="18" height="18" font-family="Liberation Sans" font-size="7"><text x="10" y="8">.0</text><text x="5" y="16">.00</text><path d="M1 5h6M4 2L1 5l3 3" stroke="#2458b8" fill="none"/></svg></button>
     <button class="xb" aria-label="Fewer decimals"><svg width="18" height="18" font-family="Liberation Sans" font-size="7"><text x="5" y="8">.00</text><text x="10" y="16">.0</text><path d="M1 13h6M4 10l3 3-3 3" stroke="#2458b8" fill="none"/></svg></button>
     <span class="vsep tight"></span>
     <button class="xb" aria-label="Outdent"><svg width="16" height="13"><path d="M3 .5h13M8 3.500h8M8 6.500h5M8 9.500h8M3 12.500h8" stroke="#000"/><path d="M6 6H1m2-3L0 6l3 3" stroke="#2458b8" fill="none"/></svg></button>
     <button class="xb" aria-label="Indent"><svg width="16" height="13"><path d="M3 .5h13M8 3.500h8M8 6.500h5M8 9.500h8M3 12.500h8" stroke="#000"/><path d="M0 6h6M3 3l3 3-3 3" stroke="#2458b8" fill="none"/></svg></button>
     <span class="vsep tight"></span>
     <button class="xb" aria-label="Borders"><svg width="14" height="13"><path d="M.5.500h12v12H.5zM6.500 0v12M0 6.500h12" fill="none" stroke="#555" stroke-dasharray="1 1"/><path d="M0 12.500h13" stroke="#000"/></svg></button><button class="car" aria-label="Border list"><svg width="5" height="3"><use href="#tri"/></svg></button>
     <button class="xb" aria-label="Fill"><svg width="16" height="16"><path d="M4 6l5-4 5 5-5 4z" fill="#fff" stroke="#456"/><path d="M13 5q3 2 2 6" stroke="#2458b8" stroke-width="2" fill="none"/><path d="M0 12h16v3H0z" fill="#ff0"/></svg></button><button class="car" aria-label="Fill list"><svg width="5" height="3"><use href="#tri"/></svg></button>
     <button class="xb" aria-label="Font colour"><svg width="16" height="16"><text x="8" y="11" text-anchor="middle" font-size="14" font-weight="bold" font-family="Liberation Serif" fill="#2c4a94">A</text><path d="M0 12h16v3H0z" fill="#f00"/></svg></button><button class="car" aria-label="Colour list"><svg width="5" height="3"><use href="#tri"/></svg></button>
    </div>
    <div class="xl-end"><svg width="7" height="7" fill="#fff"><path d="M0 0h7v1H0zM0 3h7L3.500 7z"/></svg></div>
   </div>
   <nav class="xl-menu d-flex align-items-center">
    <span class="d-flex"><span class="grip"></span><svg width="18" height="17"><path d="M5 2h9l3 3v11H5z" fill="#dfe8fa" stroke="#4a68a8"/><svg width="12" height="12"><use href="#xls"/></svg></svg></span>
    <div class="xl-links d-flex"><a href="#">文件(<u>F</u>)</a><a href="#">编辑(<u>E</u>)</a><a href="#">视图(<u>V</u>)</a><a href="#">插入(<u>I</u>)</a><a href="#">格式(<u>O</u>)</a><a href="#">工具(<u>T</u>)</a><a href="#">数据(<u>D</u>)</a><a href="#">窗口(<u>W</u>)</a><a href="#">帮助(<u>H</u>)</a><a href="#">Adobe PDF(<u>B</u>)</a></div>
   </nav>
   <div class="xl-rowc d-flex"><div class="xl-bar short d-flex align-items-center"><span class="grip"></span><button class="xb" aria-label="PDF"><svg width="16" height="16"><use href="#pdf"/></svg></button><button class="xb" aria-label="PDF mail"><svg width="16" height="16"><use href="#pdf"/><path d="M8 0h8v5h-4l-3 3V5H8z" fill="#ffd42a" stroke="#a87808"/></svg></button></div><div class="xl-end short"><svg width="7" height="7" fill="#fff"><path d="M0 0h7v1H0zM0 3h7L3.500 7z"/></svg></div></div>
   <div class="fx d-flex"><input class="namebox" aria-label="Name box" value="B17"><div class="fx-mid d-flex align-items-center justify-content-between ps-1 pe-1"><svg width="8" height="5"><use href="#tri"/></svg><i class="fw-bold">fx</i></div><input class="fx-in flex-grow-1" aria-label="Formula" value="√"></div>
   <table class="sheet">
    <colgroup><col style="width:34px"><col style="width:149px"><col style="width:549px"><col style="width:72px"><col style="width:72px"><col style="width:72px"><col style="width:72px"><col style="width:72px"></colgroup>
    <tr><th></th><th>A</th><th class="hot">B</th><th>C</th><th>D</th><th>E</th><th>F</th><th>G</th></tr>
    <tr><th>10</th><td class="k"><span class="z">文件名称</span></td><td class="v">ME3630_GE2015_SB_B</td><td></td><td></td><td></td><td></td><td></td></tr>
    <tr><th>11</th><td class="k"><span class="z">下单时间</span></td><td class="v">2016/6/24 18:36</td><td></td><td></td><td></td><td></td><td></td></tr>
    <tr><th>12</th><td class="k"><span class="z">交货日期</span></td><td class="v">2016/7/3 0:00</td><td></td><td></td><td></td><td></td><td></td></tr>
    <tr><th>13</th><td class="k"><span class="z">交货数量</span></td><td class="v">100</td><td></td><td></td><td></td><td></td><td></td></tr>
    <tr><th>14</th><td class="k"><span class="z">交货面积</span></td><td class="v">1.682</td><td></td><td></td><td></td><td></td><td></td></tr>
    <tr><th>15</th><td class="k"><span class="z">交货单位</span></td><td class="v">Set</td><td></td><td></td><td></td><td></td><td></td></tr>
    <tr><th>16</th><td class="k">OSP</td><td class="v tick">√</td><td></td><td></td><td></td><td></td><td></td></tr>
    <tr><th class="hot">17</th><td class="k">Panal<span class="z">拼版信息</span></td><td class="v tick cur">√</td><td></td><td></td><td></td><td></td><td></td></tr>
    <tr><th>18</th><td class="k"><span class="z">阻抗</span></td><td class="v tick">√</td><td></td><td></td><td></td><td></td><td></td></tr>
    <tr><th>19</th><td class="k"><span class="z">孔径</span>&lt;=0.25</td><td class="v tick">√</td><td></td><td></td><td></td><td></td><td></td></tr>
    <tr><th>20</th><td class="k"><span class="z">沉金</span></td><td class="v tick">√</td><td></td><td></td><td></td><td></td><td></td></tr>
    <tr><th>21</th><td class="k nob"><span class="z">客户需求报告录入</span></td><td class="v"></td><td></td><td></td><td></td><td></td><td></td></tr>
    <tr><th>22</th><td class="k"><span class="z">客户工程资料录入</span></td><td class="v">CYing</td><td></td><td></td><td></td><td></td><td></td></tr>
    <tr><th>23</th><td class="k"><span class="z">文件版本</span></td><td class="v">Gerber</td><td></td><td></td><td></td><td></td><td></td></tr>
   </table>
  </div>
 </section>

 <div class="ime position-absolute d-flex align-items-center justify-content-between">
  <svg width="18" height="18"><path d="M2 3l13-2 2 13-13 3z" fill="#2fb757"/><path d="M13 5H7q-3 2 0 4h4q3 2 0 4H6" fill="none" stroke="#fff" stroke-width="2"/></svg>
  <span>五</span>
  <svg width="13" height="14"><path d="M8 1q5 3 4 8-3 6-11 3 9-1 7-11z" fill="#3f86cc"/></svg>
  <svg width="11" height="14"><circle cx="3" cy="4" r="2" fill="none" stroke="#3f86cc"/><path d="M7 8h3v3l-2 3" fill="#3f86cc"/></svg>
  <svg width="17" height="12"><rect width="17" height="12" fill="#3f86cc"/><path d="M2 3.500h13M2 6.500h13" stroke="#fff" stroke-dasharray="2 1"/><path d="M5 9.500h7" stroke="#fff"/></svg>
  <svg width="11" height="14"><circle cx="5.500" cy="4" r="3.500" fill="#a8a8a8"/><rect y="8" width="11" height="6" rx="2" fill="#a8a8a8"/></svg>
  <svg width="15" height="15"><path d="M1 12l6-6q0-5 5-5l-2 3 2 2 3-2q0 5-5 5l-6 5z" fill="#3f86cc"/></svg>
 </div>

 <footer class="tasks d-flex flex-shrink-0 position-relative overflow-visible ps-5">
  <div class="orb position-absolute"></div>
  <div class="task-list d-flex ms-2 flex-grow-1">
   <div class="task"><i style="background:#e8a030"></i></div><div class="task"><i style="background:#f3e3bb"></i></div><div class="task"><i style="background:#1b4fb0"></i></div><div class="task"><i style="background:#2a9a86"></i></div><div class="task"><i style="background:#15157a"></i></div><div class="task"><i style="background:#15157a"></i></div><div class="task"><i style="background:#15157a"></i></div><div class="task"><i style="background:#c03020"></i></div><div class="task"><i style="background:#3f8a44"></i></div><div class="task"><i style="background:#e9efe6"></i></div><div class="task"><i style="background:#3f8a44"></i></div><div class="task"><i style="background:#e9efe6"></i></div><div class="task"><i style="background:#3f8a44"></i></div><div class="task"><i style="background:#2a9a86"></i></div><div class="task"><i style="background:#1b4fb0"></i></div><div class="task"><i style="background:#1b4fb0"></i></div><div class="task"><i style="background:#1b4fb0"></i></div><div class="task"><i style="background:#1b4fb0"></i></div><div class="task"><i style="background:#5f97c4"></i></div>
  </div>
 </footer>
</div>
<script src="https://cdn.jsdelivr.net/npm/bootstrap@5.3.0/dist/js/bootstrap.bundle.min.js"></script>
</body>
</html>
